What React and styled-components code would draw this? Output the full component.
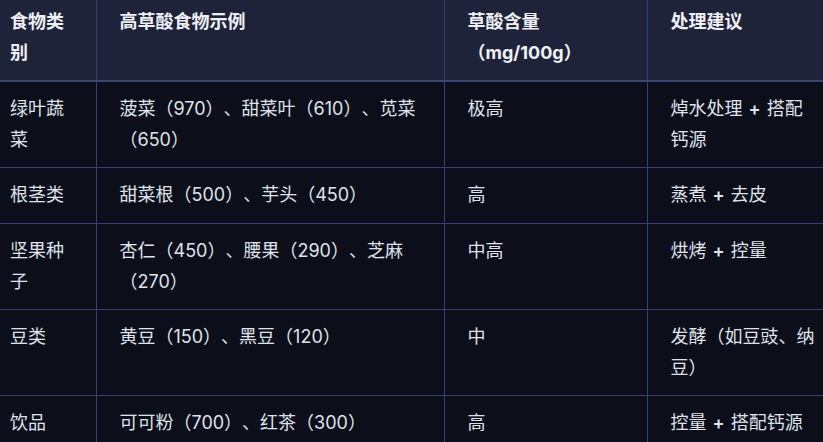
import React from 'react'
import styled, { createGlobalStyle } from 'styled-components'

const GlobalStyle = createGlobalStyle`
    html, body {
        margin: 0;
        padding: 0;
        background: #0c0f1a;
        overflow: hidden;
    }
`

const Viewport = styled.div`
    width: 823px;
    height: 442px;
    overflow: hidden;
    background: #0c0f1a;
`

const Table = styled.table`
    margin-top: -5px;
    width: 839px;
    table-layout: fixed;
    border-collapse: collapse;
    font-family: Inter, "Noto Sans CJK SC", sans-serif;
    font-size: 18px;
    line-height: 1.7;
    color: #dfe2ea;
    text-spacing-trim: space-all;
`

const Head = styled.thead`
    background: #1e2339;
`

const Th = styled.th`
    text-align: left;
    vertical-align: top;
    font-weight: 700;
    color: #eef0f5;
    padding: 12px 23px;
    border-left: 1px solid #34406f;
    border-bottom: 2px solid #3a4675;
    &:first-child {
        padding-left: 10px;
        border-left: none;
    }
`

const Td = styled.td`
    vertical-align: top;
    padding: 12px 23px;
    border-left: 1px solid #34406f;
    border-top: 1px solid #34406f;
    &:first-child {
        padding-left: 10px;
        border-left: none;
    }
`

const Plus = styled.span`
    font-weight: 600;
    padding: 0 1px;
`

const rows = [
    ['绿叶蔬菜', '菠菜（970）、甜菜叶（610）、苋菜（650）', '极高', ['焯水处理', '搭配钙源']],
    ['根茎类', '甜菜根（500）、芋头（450）', '高', ['蒸煮', '去皮']],
    ['坚果种子', '杏仁（450）、腰果（290）、芝麻（270）', '中高', ['烘烤', '控量']],
    ['豆类', '黄豆（150）、黑豆（120）', '中', '发酵（如豆豉、纳豆）'],
    ['饮品', '可可粉（700）、红茶（300）', '高', ['控量', '搭配钙源']],
]

const Advice = ({ value }) =>
    Array.isArray(value)
        ? <>{ value[0] } <Plus>+</Plus> { value[1] }</>
        : value

export default function App() {
    return (
        <Viewport>
            <GlobalStyle />
            <Table>
                <colgroup>
                    <col style={{ width: 96 }} />
                    <col style={{ width: 348 }} />
                    <col style={{ width: 203 }} />
                    <col style={{ width: 192 }} />
                </colgroup>
                <Head>
                    <tr>
                        <Th>食物类别</Th>
                        <Th>高草酸食物示例</Th>
                        <Th>草酸含量（mg/100g）</Th>
                        <Th>处理建议</Th>
                    </tr>
                </Head>
                <tbody>
                    { rows.map(r => (
                        <tr key={ r[0] }>
                            <Td>{ r[0] }</Td>
                            <Td>{ r[1] }</Td>
                            <Td>{ r[2] }</Td>
                            <Td><Advice value={ r[3] } /></Td>
                        </tr>
                    )) }
                </tbody>
            </Table>
        </Viewport>
    )
}
